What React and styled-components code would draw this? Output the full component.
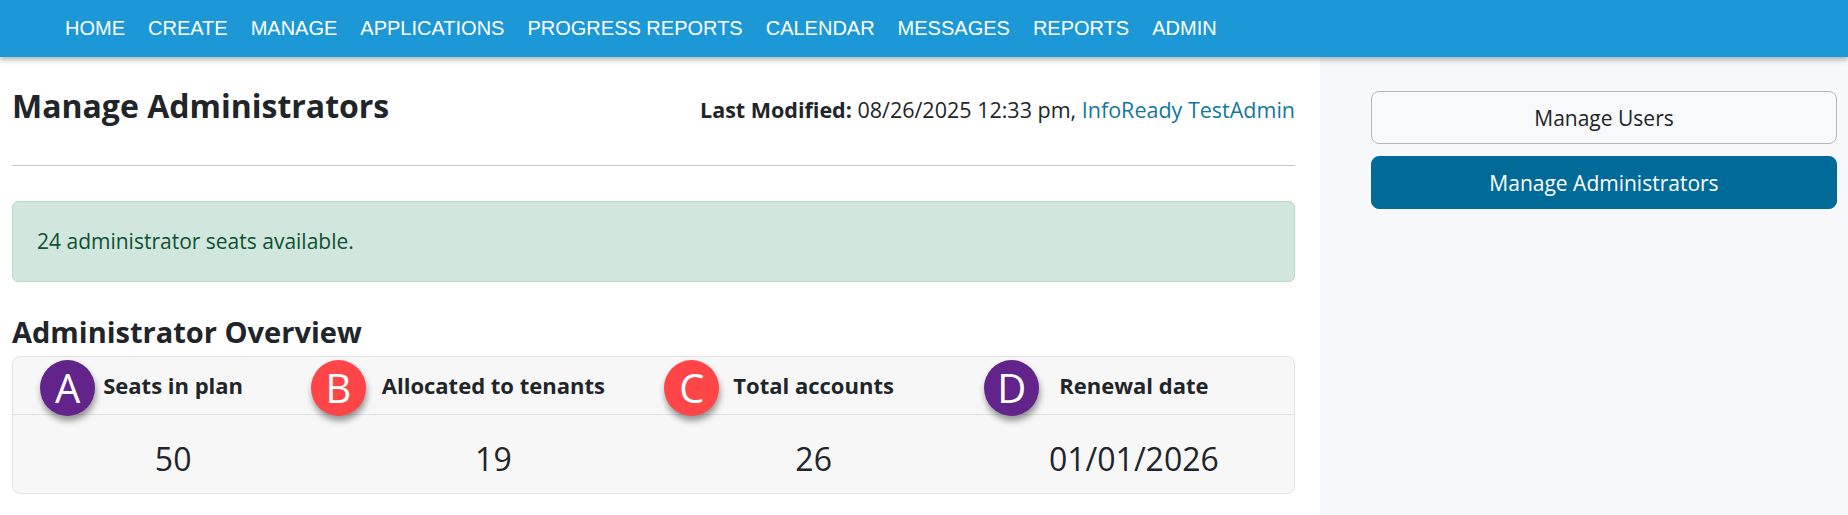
import React from "react";
import styled, { createGlobalStyle } from "styled-components";

const GlobalStyle = createGlobalStyle`
  html, body { margin: 0; padding: 0; }
  body {
    font-family: "Open Sans", "Noto Sans", sans-serif;
    color: #212529;
    background: #ffffff;
  }
  * { box-sizing: border-box; }
`;

const Page = styled.div`
  display: flex;
  flex-direction: column;
  min-height: 100vh;
`;

const NavBar = styled.nav`
  position: relative;
  z-index: 2;
  height: 57px;
  background: #1c98d6;
  display: flex;
  align-items: center;
  gap: 23px;
  padding-left: 65px;
  box-shadow: 0 3px 5px rgba(0, 0, 0, 0.28);
`;

const NavLink = styled.a`
  font-family: "Liberation Sans", Arial, sans-serif;
  font-size: 20px;
  color: #ffffff;
  text-decoration: none;
  text-transform: uppercase;
  white-space: nowrap;
`;

const Body = styled.div`
  flex: 1;
  display: flex;
`;

const Main = styled.main`
  flex: 1;
  padding: 29px 25px 0 12px;
  display: flex;
  flex-direction: column;
`;

const Sidebar = styled.aside`
  width: 528px;
  flex-shrink: 0;
  background: #f7f8fa;
  padding: 34px 11px 0 51px;
  display: flex;
  flex-direction: column;
  gap: 12px;
`;

const SideButton = styled.button`
  height: 53px;
  width: 100%;
  border-radius: 8px;
  font-family: "Open Sans", "Noto Sans", sans-serif;
  font-size: 21px;
  cursor: pointer;
  border: 1px solid ${(p) => (p.$active ? "#006b99" : "#b5b8bb")};
  background: ${(p) => (p.$active ? "#006b99" : "#f8f9fa")};
  color: ${(p) => (p.$active ? "#ffffff" : "#212529")};
`;

const TitleRow = styled.div`
  display: flex;
  justify-content: space-between;
  align-items: baseline;
`;

const Title = styled.h1`
  margin: 0;
  font-size: 32px;
  line-height: 40px;
  font-weight: 700;
`;

const Modified = styled.div`
  font-size: 21.5px;
  line-height: 30px;
`;

const Strong = styled.span`
  font-weight: 700;
`;

const UserLink = styled.a`
  color: #13789c;
  text-decoration: none;
`;

const Divider = styled.hr`
  margin: 39px 0 35px;
  border: 0;
  border-top: 1px solid #c6c6c6;
`;

const Alert = styled.div`
  background: #d1e7dd;
  border: 1px solid #badbcc;
  border-radius: 6px;
  color: #0f5132;
  font-size: 21px;
  line-height: 31.5px;
  padding: 23.75px 24px;
`;

const SectionTitle = styled.h2`
  margin: 32px 0 6px;
  font-size: 29px;
  line-height: 36px;
  font-weight: 700;
`;

const OverviewCard = styled.div`
  border: 1px solid #e2e3e5;
  border-radius: 8px;
  background: #f7f7f7;
`;

const Row = styled.div`
  display: grid;
  grid-template-columns: repeat(4, 1fr);
  border-bottom: ${(p) => (p.$divider ? "1px solid #e1e1e1" : "none")};
`;

const HeaderCell = styled.div`
  display: flex;
  justify-content: center;
  padding: 12px 8px;
  font-size: 22px;
  line-height: 33px;
  font-weight: 700;
`;

const HeaderLabel = styled.span`
  position: relative;
  white-space: nowrap;
`;

const Badge = styled.span`
  position: absolute;
  right: calc(100% + ${(p) => p.$gap}px);
  top: 50%;
  margin-top: -26px;
  width: 55px;
  height: 56px;
  border-radius: 50%;
  background: ${(p) => p.$color};
  color: #ffffff;
  display: flex;
  align-items: center;
  justify-content: center;
  font-family: "Open Sans", "Noto Sans", sans-serif;
  font-weight: 400;
  font-size: 40px;
  line-height: 1;
  box-shadow: 1px 5px 6px rgba(0, 0, 0, 0.4);
`;

const ValueCell = styled.div`
  text-align: center;
  padding: 20px 8px 10px;
  font-size: 32px;
  line-height: 48px;
`;

const navItems = [
  "Home",
  "Create",
  "Manage",
  "Applications",
  "Progress Reports",
  "Calendar",
  "Messages",
  "Reports",
  "Admin",
];

const PURPLE = "#62238a";
const RED = "#ff4547";

const stats = [
  { badge: "A", color: PURPLE, gap: 8, label: "Seats in plan", value: "50" },
  { badge: "B", color: RED, gap: 16, label: "Allocated to tenants", value: "19" },
  { badge: "C", color: RED, gap: 14, label: "Total accounts", value: "26" },
  { badge: "D", color: PURPLE, gap: 20, label: "Renewal date", value: "01/01/2026" },
];

export default function App() {
  return (
    <>
      <GlobalStyle />
      <Page>
        <NavBar>
          {navItems.map((item) => (
            <NavLink key={item} href="#">
              {item}
            </NavLink>
          ))}
        </NavBar>
        <Body>
          <Main>
            <TitleRow>
              <Title>Manage Administrators</Title>
              <Modified>
                <Strong>Last Modified:</Strong> 08/26/2025 12:33 pm,{" "}
                <UserLink href="#">InfoReady TestAdmin</UserLink>
              </Modified>
            </TitleRow>
            <Divider />
            <Alert>24 administrator seats available.</Alert>
            <SectionTitle>Administrator Overview</SectionTitle>
            <OverviewCard>
              <Row $divider>
                {stats.map((s) => (
                  <HeaderCell key={s.label}>
                    <HeaderLabel>
                      <Badge $color={s.color} $gap={s.gap}>
                        {s.badge}
                      </Badge>
                      {s.label}
                    </HeaderLabel>
                  </HeaderCell>
                ))}
              </Row>
              <Row>
                {stats.map((s) => (
                  <ValueCell key={s.label}>{s.value}</ValueCell>
                ))}
              </Row>
            </OverviewCard>
          </Main>
          <Sidebar>
            <SideButton>Manage Users</SideButton>
            <SideButton $active>Manage Administrators</SideButton>
          </Sidebar>
        </Body>
      </Page>
    </>
  );
}
